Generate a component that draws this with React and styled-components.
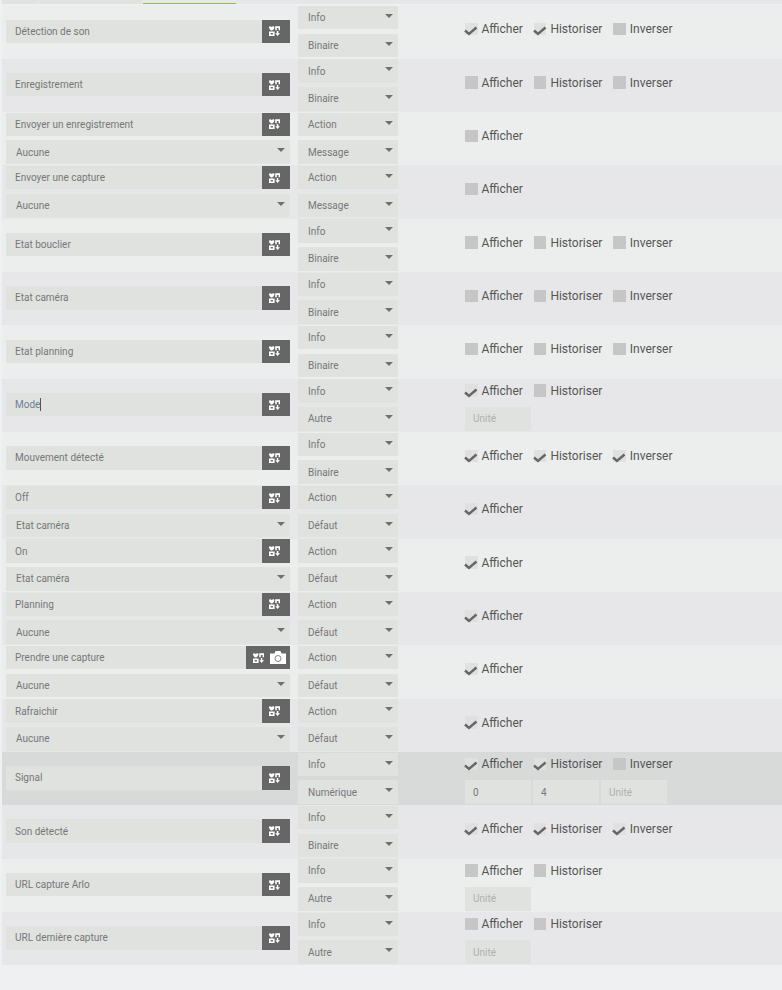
import React from "react";
import styled, { createGlobalStyle } from "styled-components";

const GlobalStyle = createGlobalStyle`
  html, body {
    margin: 0;
    padding: 0;
    background: #eff0f2;
    font-family: Roboto, "Liberation Sans", sans-serif;
    overflow: hidden;
  }
`;

const Page = styled.div`
  width: 782px;
  height: 990px;
`;

const TabStrip = styled.div`
  display: flex;
  height: 4px;
  gap: 1px;
  margin: 0 0 1.4px 2px;
  background: #e7e7e9;
`;

const Tab = styled.div`
  width: ${(props) => props.$width}px;
  background: ${(props) => (props.$active ? "#e7e7e9" : "#e0e2e0")};
  border-bottom: 1px solid ${(props) => (props.$active ? "#8fc04f" : "#e0e2e0")};
  box-sizing: border-box;
`;

const Table = styled.div`
  margin-left: 2px;
`;

const rowColors = { odd: "#eceeed", even: "#e7e7e9", active: "#d8dad9" };

const Row = styled.div`
  display: grid;
  grid-template-columns: 284px 100px 1fr;
  column-gap: 8px;
  height: 53.33px;
  padding: 0.6px 0 0 4px;
  box-sizing: border-box;
  background: ${(props) => rowColors[props.$tone]};
`;

const NameCell = styled.div`
  display: flex;
  flex-direction: column;
  justify-content: ${(props) => (props.$stacked ? "flex-start" : "center")};
  gap: 4.3px;
  height: 50.6px;
`;

const Field = styled.div`
  display: flex;
  align-items: center;
  height: 23.5px;
  flex-shrink: 0;
  background: #e0e2e0;
  font-size: 10px;
  color: #777;
  box-sizing: border-box;
`;

const NameField = styled(Field)`
  padding-left: 9px;
`;

const NameText = styled.span`
  flex: 1;
  color: ${(props) => (props.$focused ? "#6f7f96" : "#777")};
`;

const Caret = styled.span`
  display: inline-block;
  width: 1px;
  height: 13px;
  background: #555;
  vertical-align: -3px;
`;

const CmdButton = styled.div`
  display: flex;
  align-items: center;
  gap: 6px;
  height: 100%;
  width: ${(props) => (props.$wide ? 44 : 28)}px;
  padding-left: 7px;
  box-sizing: border-box;
  background: #666;
  flex-shrink: 0;
`;

const SelectBox = styled(Field)`
  position: relative;
  padding-left: 10px;
`;

const Arrow = styled.span`
  position: absolute;
  right: 5.5px;
  top: 8px;
  width: 0;
  height: 0;
  border-left: 4.5px solid transparent;
  border-right: 4.5px solid transparent;
  border-top: 4px solid #707070;
`;

const TypeCell = styled.div`
  display: flex;
  flex-direction: column;
  gap: 4.3px;
`;

const ParamCell = styled.div`
  display: flex;
  flex-direction: column;
  gap: 9.2px;
  padding: ${(props) => (props.$compact ? "4.37px" : "16.37px")} 0 0 59px;
`;

const Checks = styled.div`
  display: flex;
  align-items: center;
  height: 14px;
`;

const Check = styled.label`
  display: flex;
  align-items: center;
  margin-right: ${(props) => props.$gap}px;
  font-size: 12px;
  color: #555;
`;

const Box = styled.span`
  position: relative;
  width: 12.5px;
  height: 12.5px;
  margin: -0.33px 4px 0 0;
  flex-shrink: 0;
  background: ${(props) => (props.$checked ? "#dfe0df" : "#c6c6c6")};

  svg {
    position: absolute;
    left: -1px;
    top: 3.5px;
  }
`;

const Inputs = styled.div`
  display: flex;
  gap: 2px;
`;

const SmallInput = styled.div`
  width: 66px;
  height: 24px;
  display: flex;
  align-items: center;
  padding-left: 8px;
  box-sizing: border-box;
  background: #e0e2e0;
  font-size: 10px;
  color: ${(props) => (props.$placeholder ? "#aeb0ae" : "#777")};
`;

function CmdIcon() {
  return (
    <svg width="11" height="10" viewBox="0 0 11 10" fill="#fff">
      <path d="M0 1.4C0 0 1.6-.2 2.7 1 3.8-.2 5.4 0 5.4 1.4 5.4 2.8 3.6 4 2.7 4.8 1.8 4 0 2.8 0 1.4Z" />
      <path d="M6.2.3h4.8v3.9H9.6V2h-1.8v2.2H6.2z" />
      <path d="M0 5.4h5.6V10H0zM1.7 7v1.4h2.2V7z" fillRule="evenodd" />
      <path d="M7.8 5h1.5v2.2H11L8.6 10 6.3 7.2h1.5z" />
    </svg>
  );
}

function CameraIcon() {
  return (
    <svg width="16" height="13" viewBox="0 0 16 13">
      <path fill="#fff" d="M0 2.5h4.5L5.5 0h5l1 2.5H16V13H0z" />
      <circle cx="8" cy="7.5" r="3" fill="none" stroke="#666" strokeWidth="0.8" />
    </svg>
  );
}

function CheckMark() {
  return (
    <svg width="14" height="10" viewBox="0 0 14 10">
      <path d="M1 4.5 L5 8 L12.5 1.5" fill="none" stroke="#666" strokeWidth="2.4" />
    </svg>
  );
}

function Option({ label, checked, gap }) {
  return (
    <Check $gap={gap}>
      <Box $checked={checked}>{checked && <CheckMark />}</Box>
      {label}
    </Check>
  );
}

const commands = [
  { name: "Détection de son", kind: "Info", sub: "Binaire", checks: [1, 1, 0] },
  { name: "Enregistrement", kind: "Info", sub: "Binaire", checks: [0, 0, 0] },
  { name: "Envoyer un enregistrement", kind: "Action", sub: "Message", value: "Aucune", checks: [0] },
  { name: "Envoyer une capture", kind: "Action", sub: "Message", value: "Aucune", checks: [0] },
  { name: "Etat bouclier", kind: "Info", sub: "Binaire", checks: [0, 0, 0] },
  { name: "Etat caméra", kind: "Info", sub: "Binaire", checks: [0, 0, 0] },
  { name: "Etat planning", kind: "Info", sub: "Binaire", checks: [0, 0, 0] },
  { name: "Mode", kind: "Info", sub: "Autre", checks: [1, 0], inputs: [{ text: "Unité", ph: true }], focused: true },
  { name: "Mouvement détecté", kind: "Info", sub: "Binaire", checks: [1, 1, 1] },
  { name: "Off", kind: "Action", sub: "Défaut", value: "Etat caméra", checks: [1] },
  { name: "On", kind: "Action", sub: "Défaut", value: "Etat caméra", checks: [1] },
  { name: "Planning", kind: "Action", sub: "Défaut", value: "Aucune", checks: [1] },
  { name: "Prendre une capture", kind: "Action", sub: "Défaut", value: "Aucune", checks: [1], camera: true },
  { name: "Rafraichir", kind: "Action", sub: "Défaut", value: "Aucune", checks: [1] },
  {
    name: "Signal",
    kind: "Info",
    sub: "Numérique",
    checks: [1, 1, 0],
    inputs: [{ text: "0" }, { text: "4" }, { text: "Unité", ph: true }],
    hovered: true,
  },
  { name: "Son détecté", kind: "Info", sub: "Binaire", checks: [1, 1, 1] },
  { name: "URL capture Arlo", kind: "Info", sub: "Autre", checks: [0, 0], inputs: [{ text: "Unité", ph: true }] },
  { name: "URL dernière capture", kind: "Info", sub: "Autre", checks: [0, 0], inputs: [{ text: "Unité", ph: true }] },
];

const optionLabels = ["Afficher", "Historiser", "Inverser"];

function App() {
  return (
    <Page>
      <GlobalStyle />
      <TabStrip>
        <Tab $width={36} />
        <Tab $width={103} />
        <Tab $width={93} $active />
      </TabStrip>
      <Table>
        {commands.map((cmd, index) => (
          <Row
            key={cmd.name}
            $tone={cmd.hovered ? "active" : index % 2 === 0 ? "odd" : "even"}
          >
            <NameCell $stacked={!!cmd.value}>
              <NameField>
                <NameText $focused={cmd.focused}>
                  {cmd.name}
                  {cmd.focused && <Caret />}
                </NameText>
                <CmdButton $wide={cmd.camera}>
                  <CmdIcon />
                  {cmd.camera && <CameraIcon />}
                </CmdButton>
              </NameField>
              {cmd.value && (
                <SelectBox>
                  {cmd.value}
                  <Arrow />
                </SelectBox>
              )}
            </NameCell>
            <TypeCell>
              <SelectBox>
                {cmd.kind}
                <Arrow />
              </SelectBox>
              <SelectBox>
                {cmd.sub}
                <Arrow />
              </SelectBox>
            </TypeCell>
            <ParamCell $compact={!!cmd.inputs}>
              <Checks>
                {cmd.checks.map((checked, i) => (
                  <Option
                    key={optionLabels[i]}
                    label={optionLabels[i]}
                    checked={!!checked}
                    gap={11}
                  />
                ))}
              </Checks>
              {cmd.inputs && (
                <Inputs>
                  {cmd.inputs.map((input) => (
                    <SmallInput key={input.text} $placeholder={input.ph}>
                      {input.text}
                    </SmallInput>
                  ))}
                </Inputs>
              )}
            </ParamCell>
          </Row>
        ))}
      </Table>
    </Page>
  );
}

export default App;
